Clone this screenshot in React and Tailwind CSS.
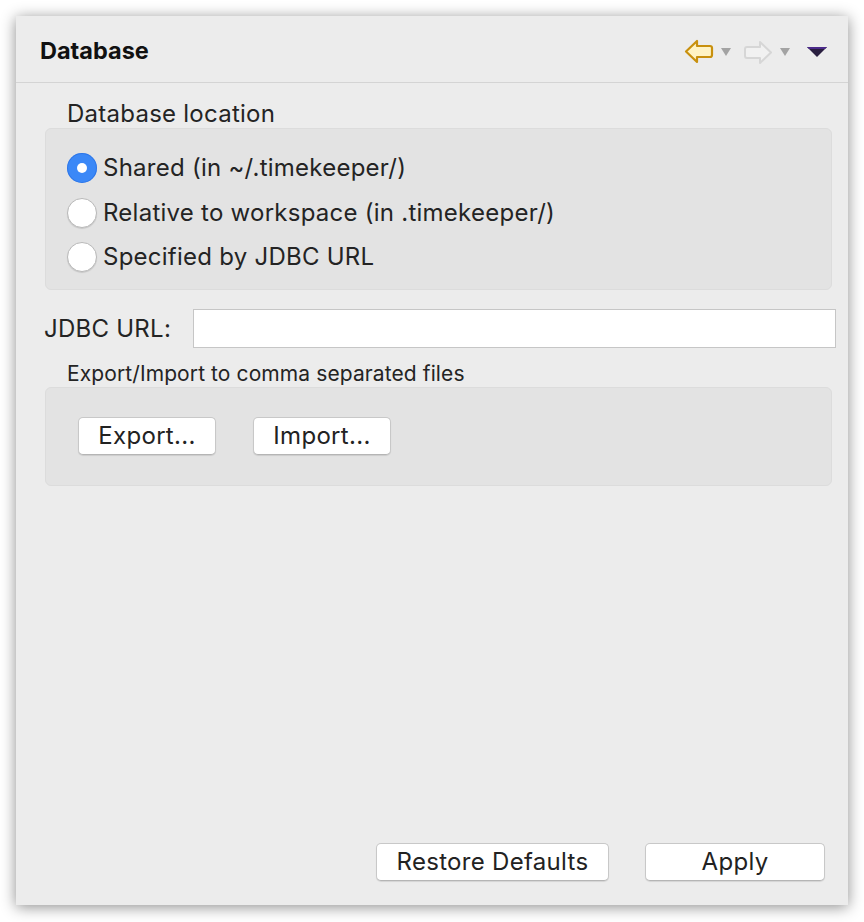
import React from "react";

function Radio({ checked }) {
  if (checked) {
    return (
      <div className="w-[30px] h-[30px] rounded-full bg-[#3b88f7] flex items-center justify-center shadow-[inset_0_0_0_1px_rgba(30,100,220,0.5)] shrink-0">
        <div className="w-[10px] h-[10px] rounded-full bg-white" />
      </div>
    );
  }
  return (
    <div className="w-[30px] h-[30px] rounded-full bg-white border border-[#b9b9b9] shadow-[0_1px_1px_rgba(0,0,0,0.12)] shrink-0" />
  );
}

function Btn({ children, w }) {
  return (
    <div
      className={`${w} h-[38px] bg-white rounded-[5px] border border-[#c8c8c8] border-b-[#b5b5b5] shadow-[0_1px_1px_rgba(0,0,0,0.1)] flex items-center justify-center text-[24px] tracking-[0.3px] text-[#222]`}
    >
      {children}
    </div>
  );
}

export default function App() {
  const font = { fontFamily: "Inter, 'Liberation Sans', sans-serif" };
  return (
    <div className="w-[864px] h-[922px] bg-white p-4" style={font}>
      <div className="w-[832px] h-[889px] bg-[#ececec] shadow-[0_2px_14px_rgba(0,0,0,0.45)] flex flex-col">
        <div className="h-[67px] shrink-0 border-b border-[#d4d4d4] flex items-center justify-between pl-[24px] pr-[21px] pt-[3px]">
          <div className="text-[23.5px] font-bold text-[#111]">Database</div>
          <div className="flex items-center">
            <svg width="30" height="25" viewBox="0 0 30 25" className="mt-[1px]">
              <path
                d="M2 12.5 L13 2 L13 7 L26 7 Q28 7 28 9 L28 16 Q28 18 26 18 L13 18 L13 23 Z"
                fill="#fff3c4"
                stroke="#c8900e"
                strokeWidth="2.2"
                strokeLinejoin="round"
              />
            </svg>
            <svg width="10" height="8" viewBox="0 0 10 8" className="ml-[7px] mt-[2px]">
              <path d="M0 0 L10 0 L5 8 Z" fill="#a3a3a3" />
            </svg>
            <svg width="30" height="25" viewBox="0 0 30 25" className="ml-[12px] mt-[3px]">
              <path
                d="M28 12.5 L17 2 L17 7 L4 7 Q2 7 2 9 L2 16 Q2 18 4 18 L17 18 L17 23 Z"
                fill="#f1f1f1"
                stroke="#d6d6d6"
                strokeWidth="2"
                strokeLinejoin="round"
              />
            </svg>
            <svg width="10" height="8" viewBox="0 0 10 8" className="ml-[7px] mt-[2px]">
              <path d="M0 0 L10 0 L5 8 Z" fill="#a3a3a3" />
            </svg>
            <svg width="20" height="10" viewBox="0 0 20 10" className="ml-[17px] mt-[2px]">
              <path d="M0 0 L20 0 L10 10 Z" fill="#2a1f40" />
              <path d="M0 0 L20 0 L18 2 L2 2 Z" fill="#4b2a8a" />
            </svg>
          </div>
        </div>

        <div className="flex-1 flex flex-col pl-[28px] pr-[12px] text-[#242424]">
          <div className="mt-[16px] h-[29px] flex items-center pl-[23px] text-[24px] tracking-[0.25px]">Database location</div>
          <div className="ml-px mr-[4px] h-[162px] rounded-[6px] bg-[#e3e3e3] border border-[#dcdcdc] pt-[17px] pl-[21px] flex flex-col">
            {[
              ["Shared (in ~/.timekeeper/)", true],
              ["Relative to workspace (in .timekeeper/)", false],
              ["Specified by JDBC URL", false],
            ].map(([t, c]) => (
              <div key={t} className="h-[44.5px] flex items-center gap-[6px] text-[24px] tracking-[0.25px]">
                <Radio checked={c} />
                <span>{t}</span>
              </div>
            ))}
          </div>

          <div className="mt-[19px] h-[39px] flex items-center">
            <div className="w-[149px] text-[24px] tracking-[0.25px]">JDBC URL:</div>
            <div className="flex-1 h-[39px] bg-white border border-[#c6c6c6]" />
          </div>

          <div className="mt-[14px] h-[24px] flex items-center pl-[23px] text-[21px] tracking-[0.1px]">
            Export/Import to comma separated files
          </div>
          <div className="mt-px ml-px mr-[4px] h-[99px] rounded-[6px] bg-[#e3e3e3] border border-[#dcdcdc] pt-[29px] pl-[32px] flex gap-[37px]">
            <Btn w="w-[138px]">Export...</Btn>
            <Btn w="w-[138px]">Import...</Btn>
          </div>

          <div className="flex-1" />
          <div className="flex justify-end gap-[36px] pr-[11px] mb-[24px]">
            <Btn w="w-[233px]">Restore Defaults</Btn>
            <Btn w="w-[180px]">Apply</Btn>
          </div>
        </div>
      </div>
    </div>
  );
}
